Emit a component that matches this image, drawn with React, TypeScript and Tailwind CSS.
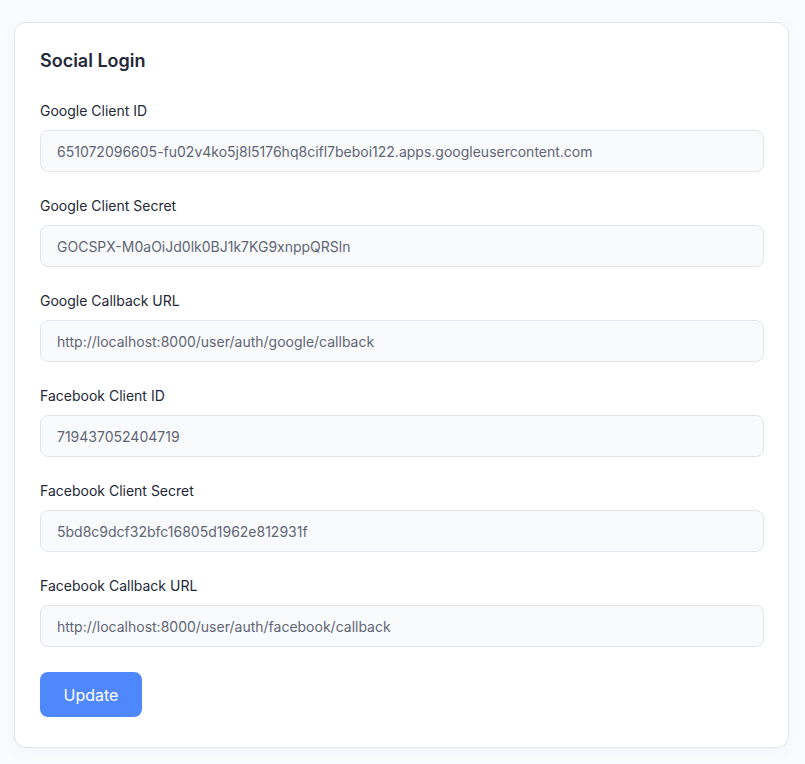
const fields = [
	{ label: "Google Client ID", value: "651072096605-fu02v4ko5j8l5176hq8cifl7beboi122.apps.googleusercontent.com" },
	{ label: "Google Client Secret", value: "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" },
	{ label: "Google Callback URL", value: "http://localhost:8000/user/auth/google/callback" },
	{ label: "Facebook Client ID", value: "719437052404719" },
	{ label: "Facebook Client Secret", value: "5bd8c9dcf32bfc16805d1962e812931f" },
	{ label: "Facebook Callback URL", value: "http://localhost:8000/user/auth/facebook/callback" },
];

const App = () => {
	return (
		<div className="min-h-[764px] bg-[#fafbfd] pt-[22px] pr-[16px] pb-4 pl-[14px] font-['Inter',sans-serif]">
			<form
				className="rounded-xl border border-[#e3e5ec] bg-white pt-[24px] pr-[24px] pb-[30px] pl-[25px] shadow-[0_4px_20px_rgba(30,40,90,0.03)]"
				onSubmit={(e) => e.preventDefault()}>
				<h2 className="text-[18px] leading-7 font-semibold text-[#232838]">Social Login</h2>

				<div className="mt-[26px] flex flex-col gap-[24px]">
					{fields.map((field) => (
						<label
							key={field.label}
							className="flex flex-col gap-[9px]">
							<span className="text-[14px] leading-5 text-[#232838]">{field.label}</span>
							<input
								defaultValue={field.value}
								className="h-[42px] w-full rounded-lg border border-[#e3e5ec] bg-[#f9fafc] px-4 text-[14px] text-[#5f6575] outline-none"
							/>
						</label>
					))}
				</div>

				<button
					type="submit"
					className="mt-[25px] h-[45px] w-[102px] rounded-lg bg-[#4f87fc] text-[16px] text-white">
					Update
				</button>
			</form>
		</div>
	);
};

export default App;
